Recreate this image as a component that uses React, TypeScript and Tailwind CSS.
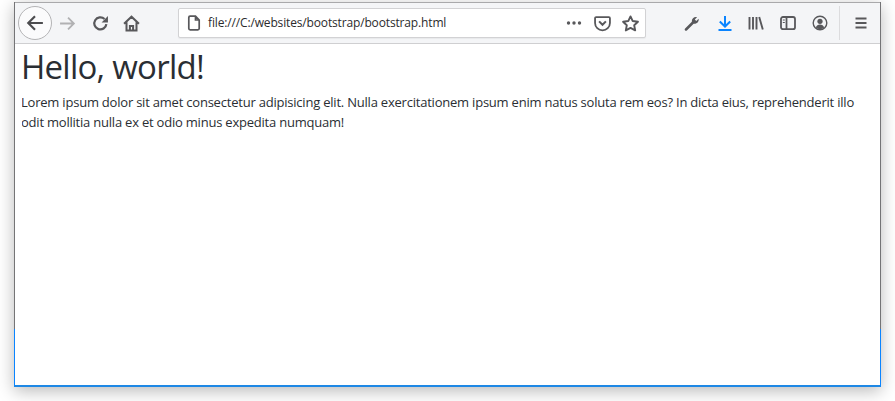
import React from 'react'

// Firefox toolbar icons, all on a 16 grid
function Icon({ children, className }: { children: React.ReactNode; className?: string }) {
  return (
    <svg viewBox="0 0 16 16" fill="none" stroke="currentColor" strokeWidth="1.6" className={className}>
      {children}
    </svg>
  )
}

function BackButton() {
  return (
    <div className="flex h-[34px] w-[34px] shrink-0 items-center justify-center rounded-full border border-[#b4b4b6] bg-[#fbfbfc] text-[#4c4c4f]">
      <Icon className="h-[18px] w-[18px]">
        <path d="M15 8H2M8 2 2 8l6 6" strokeWidth="1.900" />
      </Icon>
    </div>
  )
}

function Toolbar() {
  return (
    <div className="flex h-[42px] shrink-0 items-center border-y border-b-[#cfcfd1] border-t-[#a9a9ab] bg-[#f4f5f7] pl-[3px] text-[#58585b]">
      <BackButton />
      <Icon className="ml-[7px] h-[17px] w-[17px] text-[#b1b1b3]">
        <path d="M1 8h13M8.500 2.500 14 8l-5.500 5.500" strokeWidth="1.700" />
      </Icon>
      <Icon className="ml-[16px] h-[17px] w-[17px]">
        <path d="M13.500 8.500A5.700 5.700 0 1 1 11.800 3.800" strokeWidth="2.100" />
        <path d="M15 1v6H9z" fill="currentColor" stroke="none" />
      </Icon>
      <Icon className="ml-[14px] h-[17px] w-[17px]">
        <path d="M1 8.300 8 1.600l7 6.700M3.300 6.800v7.700h9.400V6.800M6.500 14.500V10.300h3v4.200" strokeWidth="1.900" />
      </Icon>
      <div className="ml-[38px] flex h-[30px] w-[468px] shrink-0 items-center rounded-[2px] border border-[#d2d2d4] bg-white pl-[7px] pr-[6px] shadow-[0_1px_1px_rgba(0,0,0,0.05)]">
        <Icon className="h-[16px] w-[16px] shrink-0">
          <path d="M2.800 2.500a1.300 1.300 0 0 1 1.300-1.300h5.400L13.200 5v8.500a1.300 1.300 0 0 1-1.300 1.300H4.100a1.300 1.300 0 0 1-1.300-1.300zM9.500 1.200V5h3.700" strokeWidth="1.700" />
        </Icon>
        <span className="ml-[6px] flex-1 font-['Open_Sans',sans-serif] text-[12px] tracking-[-0.15px] text-[#2b2b2d]">
          file:///C:/websites/bootstrap/bootstrap.html
        </span>
        <Icon className="h-[16px] w-[16px] shrink-0">
          <circle cx="2.500" cy="8" r="1.700" fill="currentColor" stroke="none" />
          <circle cx="8" cy="8" r="1.700" fill="currentColor" stroke="none" />
          <circle cx="13.500" cy="8" r="1.700" fill="currentColor" stroke="none" />
        </Icon>
        <Icon className="ml-[12px] h-[17px] w-[17px] shrink-0">
          <path d="M1 3a1 1 0 0 1 1-1h12a1 1 0 0 1 1 1v4.500a7 7 0 0 1-14 0z" strokeWidth="1.700" />
          <path d="m4.800 6 3.200 3.200L11.200 6" strokeWidth="1.900" />
        </Icon>
        <Icon className="ml-[11px] h-[17px] w-[17px] shrink-0">
          <path d="m8 1.300 2.100 4.400 4.900.7-3.500 3.300.9 4.800L8 12.200l-4.400 2.300.9-4.800L1 6.400l4.900-.7z" strokeWidth="1.800" strokeLinejoin="round" />
        </Icon>
      </div>
      <Icon className="ml-[38px] h-[16px] w-[16px] shrink-0">
        <path d="M2 14.500 8.500 8" strokeWidth="2.500" strokeLinecap="round" />
        <path d="M7.800 6.200c0-2.700 2.500-4.700 5.200-4l-2.200 2.300 1.500 1.500 2.300-2.200c.6 2.800-1.400 5-4.200 5-1.600 0-2.600-1-2.600-2.600z" fill="currentColor" stroke="none" />
      </Icon>
      <Icon className="ml-[17px] h-[16px] w-[16px] shrink-0 text-[#0a84ff]">
        <path d="M8 1v10M2.800 6.500 8 11.500l5.200-5M1.500 15h13" strokeWidth="2" />
      </Icon>
      <Icon className="ml-[15px] h-[16px] w-[16px] shrink-0">
        <path d="M1.500 2v12.500M5 2v12.500M8.500 2v12.500M11.200 2l3.600 12.500" strokeWidth="1.900" />
      </Icon>
      <Icon className="ml-[16px] h-[16px] w-[16px] shrink-0">
        <rect x="1" y="2" width="14" height="12.200" rx="2" strokeWidth="1.800" />
        <path d="M6.500 2v12" strokeWidth="1.800" />
        <path d="M2.800 5h2M2.800 7.500h2" strokeWidth="1" />
      </Icon>
      <Icon className="ml-[16px] h-[16px] w-[16px] shrink-0">
        <circle cx="8" cy="8" r="6.800" strokeWidth="1.400" />
        <circle cx="8" cy="6.300" r="2.600" fill="currentColor" stroke="none" />
        <path d="M3.800 12.500c.6-2 2.300-3 4.200-3s3.600 1 4.200 3a6 6 0 0 1-8.400 0z" fill="currentColor" stroke="none" />
      </Icon>
      <div className="ml-[11px] h-[34px] w-px shrink-0 bg-[#dcdcde]" />
      <Icon className="ml-[13px] h-[16px] w-[16px] shrink-0">
        <path d="M2.500 3.500h11M2.500 8h11M2.500 12.500h11" strokeWidth="2" />
      </Icon>
    </div>
  )
}

export default function App() {
  return (
    <div className="h-[401px] w-[895px] overflow-hidden bg-white pl-[14px] pt-[2px]">
      <div className="flex h-[385px] w-[867px] flex-col bg-white shadow-[0_4px_16px_rgba(0,0,0,0.28)]">
        <div className="flex h-[327px] flex-col border-x border-[#747476]">
          <Toolbar />
          <div className="pl-[7px] font-['Open_Sans',sans-serif] text-[#2a2e33]">
            <div className="overflow-hidden">
              <h1 className="-ml-px mt-[2px] text-[33px] leading-[41px] font-normal tracking-[-0.75px]">Hello, world!</h1>
              <p className="-ml-px mt-[5px] w-[846px] text-[13px] leading-[20px] tracking-[-0.215px]">
                Lorem ipsum dolor sit amet consectetur adipisicing elit. Nulla exercitationem ipsum enim natus soluta rem eos? In dicta eius, reprehenderit illo odit mollitia nulla ex et odio minus expedita numquam!
              </p>
            </div>
          </div>
        </div>
        <div className="h-[58px] border-x border-b-2 border-[#0a84ff] border-b-[#1e88e5]" />
      </div>
    </div>
  )
}
